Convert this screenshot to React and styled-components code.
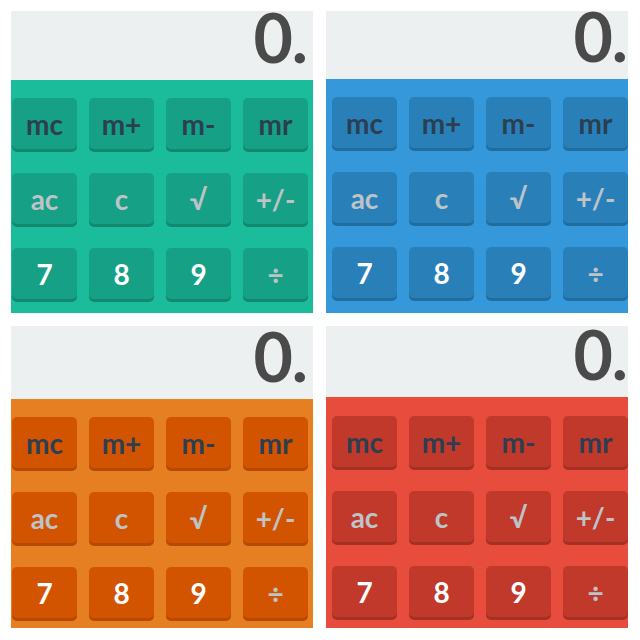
import React from 'react';
import styled, { createGlobalStyle } from 'styled-components';

const GlobalStyle = createGlobalStyle`
  html, body {
    margin: 0;
    padding: 0;
    background: #ffffff;
  }
  body {
    font-family: Lato, "Open Sans", sans-serif;
  }
`;

const themes = {
  turquoise: { body: '#1abc9c', key: '#16a085', edge: '#12896f' },
  blue: { body: '#3498db', key: '#2980b9', edge: '#226d9f' },
  orange: { body: '#e67e22', key: '#d35400', edge: '#b84900' },
  red: { body: '#e74c3c', key: '#c0392b', edge: '#a53125' },
};

const Collage = styled.div`
  display: grid;
  grid-template-columns: 302px 302px;
  grid-template-rows: 302px 302px;
  gap: 13px;
  padding: 11px 12px 12px 11px;
  width: 640px;
  height: 640px;
  box-sizing: border-box;
`;

const Panel = styled.div`
  display: flex;
  flex-direction: column;
  overflow: hidden;
  background: ${(p) => p.theme.body};
`;

// the readout sits on a fixed baseline 17px above the keypad
const Display = styled.div`
  flex: 0 0 ${(p) => p.height}px;
  min-height: 0;
  display: flex;
  justify-content: flex-end;
  align-items: flex-end;
  padding: 0 ${(p) => p.padRight}px 17px 0;
  box-sizing: border-box;
  background: #ecf0f1;
`;

const Readout = styled.span`
  font-family: Lato, sans-serif;
  font-size: 68px;
  font-weight: 700;
  line-height: 52px;
  color: #4a4a4a;
  letter-spacing: -1px;
`;

const Keypad = styled.div`
  flex: 1;
  min-height: 0;
  display: grid;
  grid-template-columns: repeat(4, 65px);
  grid-auto-rows: 51px;
  column-gap: 12px;
  row-gap: 24px;
  padding: ${(p) => p.padTop}px 0 0 ${(p) => p.padLeft}px;
  box-sizing: border-box;
`;

const Key = styled.button`
  border: none;
  margin: 0;
  padding: 0;
  border-radius: 5px;
  background: ${(p) => p.theme.key};
  box-shadow: 0 3px 0 ${(p) => p.theme.edge};
  font-family: Lato, sans-serif;
  font-size: 28px;
  font-weight: 700;
  color: ${(p) => p.tone};
  display: flex;
  align-items: center;
  justify-content: center;
  cursor: pointer;
`;

const tones = {
  memory: '#2c3e50',
  func: '#bdc3c7',
  digit: '#ffffff',
};

const keys = [
  ['mc', 'memory'],
  ['m+', 'memory'],
  ['m-', 'memory'],
  ['mr', 'memory'],
  ['ac', 'func'],
  ['c', 'func'],
  ['√', 'func'],
  ['+/-', 'func'],
  ['7', 'digit'],
  ['8', 'digit'],
  ['9', 'digit'],
  ['÷', 'func'],
];

// each tile is a slightly different crop of the same calculator
const panels = [
  { theme: 'turquoise', display: 69, padRight: 6, padLeft: 1, padTop: 18 },
  { theme: 'blue', display: 68, padRight: 1, padLeft: 6, padTop: 18 },
  { theme: 'orange', display: 73, padRight: 6, padLeft: 1, padTop: 18 },
  { theme: 'red', display: 71, padRight: 1, padLeft: 6, padTop: 19 },
];

function Calculator({ config }) {
  const theme = themes[config.theme];
  return (
    <Panel theme={theme}>
      <Display height={config.display} padRight={config.padRight}>
        <Readout>0.</Readout>
      </Display>
      <Keypad padTop={config.padTop} padLeft={config.padLeft}>
        {keys.map(([label, kind]) => (
          <Key key={label} theme={theme} tone={tones[kind]}>
            {label}
          </Key>
        ))}
      </Keypad>
    </Panel>
  );
}

export default function App() {
  return (
    <>
      <GlobalStyle />
      <Collage>
        {panels.map((p) => (
          <Calculator key={p.theme} config={p} />
        ))}
      </Collage>
    </>
  );
}
